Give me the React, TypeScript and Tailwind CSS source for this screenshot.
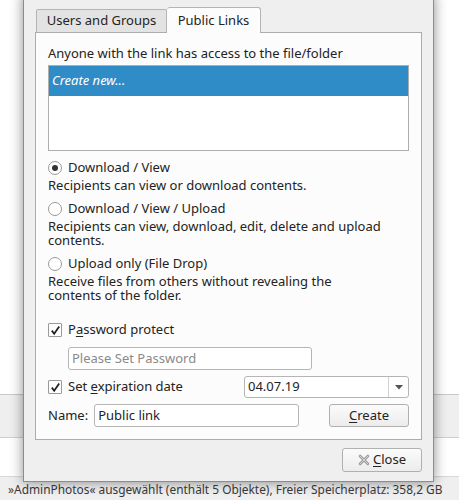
import React from 'react';

const font = { fontFamily: '"Noto Sans", "DejaVu Sans", sans-serif' };

const Radio = ({checked, label}: {checked?: boolean; label: string}) => (
    <div className="flex items-center h-[22px]">
        <span className="w-[14px] h-[14px] rounded-full border border-[#9a9a9a] bg-white flex items-center justify-center">
            {checked && <span className="w-[6px] h-[6px] rounded-full bg-[#333]"/>}
        </span>
        <span className="ml-[6px]">{label}</span>
    </div>
);

const Check = ({children}: {children: React.ReactNode}) => (
    <div className="flex items-center h-[22px]">
        <span className="w-[14px] h-[14px] border border-[#9a9a9a] bg-white flex items-center justify-center rounded-[1px]">
            <svg width="11" height="11" viewBox="0 0 11 11">
                <path d="M1.8 5.6 L4.2 8.8 L9.2 1.6" fill="none" stroke="#222" strokeWidth="1.8"/>
            </svg>
        </span>
        <span className="ml-[6px]">{children}</span>
    </div>
);

export default function App() {
    return (
        <div className="relative w-[459px] h-[500px] overflow-hidden bg-white text-[13px] text-[#232323]" style={font}>
            {/* background window */}
            <div className="flex flex-col h-full">
                <div className="h-[394px] bg-white"/>
                <div className="h-[43px] bg-[#efefef] border-t border-[#c8c8c8]"/>
                <div className="h-[39px] bg-white border-t border-[#d0d0d0]"/>
                <div className="flex-1 bg-[#efefef] border-t border-[#d8d8d8] pl-[8px] pt-[4px] text-[11.9px] text-[#3a3a3a] whitespace-nowrap">
                    »AdminPhotos« ausgewählt (enthält 5 Objekte), Freier Speicherplatz: 358,2 GB
                </div>
            </div>

            {/* dialog */}
            <div className="absolute left-[23px] top-[-6px] w-[411px] h-[488px] bg-[#efefef] border border-[#8c8c8c] shadow-[0_0_12px_rgba(0,0,0,0.45)] px-[11px] pt-[12px] flex flex-col">
                <div className="flex items-end h-[25px] pl-[1px]">
                    <div className="h-[23px] w-[131px] bg-[#e3e3e3] border border-[#b4b4b4] border-b-0 rounded-t-[2px] flex items-center justify-center">
                        Users and Groups
                    </div>
                    <div className="h-[26px] w-[94px] bg-[#fcfcfc] border border-[#b4b4b4] border-b-0 border-l-0 rounded-t-[3px] flex items-center justify-center -mb-px relative z-10">
                        Public Links
                    </div>
                </div>
                <div className="h-[408px] bg-[#fcfcfc] border border-[#acacac] px-[12px] pt-[11px]">
                    <div className="leading-[18px]">Anyone with the link has access to the file/folder</div>
                    <div className="mt-[3px] h-[86px] bg-white border border-[#aeaeae]">
                        <div className="h-[30px] bg-[#308cc6] text-white italic flex items-center pl-[3px]">Create new...</div>
                    </div>
                    <div className="mt-[6px]">
                        <Radio checked label="Download / View"/>
                        <div className="leading-[14px] mt-[-1px]">Recipients can view or download contents.</div>
                    </div>
                    <div className="mt-[6px]">
                        <Radio label="Download / View / Upload"/>
                        <div className="leading-[14px] mt-[-1px] w-[340px]">Recipients can view, download, edit, delete and upload contents.</div>
                    </div>
                    <div className="mt-[6px]">
                        <Radio label="Upload only (File Drop)"/>
                        <div className="leading-[14px] mt-[-1px] w-[295px]">Receive files from others without revealing the contents of the folder.</div>
                    </div>
                    <div className="mt-[17px]">
                        <Check>P<span className="underline underline-offset-2">a</span>ssword protect</Check>
                    </div>
                    <div className="mt-[6px] ml-[20px] w-[244px] h-[23px] bg-white border border-[#b5b5b5] rounded-[3px] flex items-center pl-[3px] text-[#8a8a8a]">
                        Please Set Password
                    </div>
                    <div className="mt-[6px] flex items-center justify-between">
                        <Check>Set <span className="underline underline-offset-2">e</span>xpiration date</Check>
                        <div className="w-[165px] h-[22px] bg-white border border-[#b5b5b5] rounded-[3px] flex items-center">
                            <span className="flex-1 pl-[3px]">04.07.19</span>
                            <span className="w-[20px] h-full border-l border-[#d0d0d0] flex items-center justify-center">
                                <svg width="8" height="5" viewBox="0 0 8 5"><path d="M0 0 H8 L4 4.5Z" fill="#555"/></svg>
                            </span>
                        </div>
                    </div>
                    <div className="mt-[6px] flex items-center">
                        <span>Name:</span>
                        <div className="ml-[6px] w-[205px] h-[23px] bg-white border border-[#b5b5b5] rounded-[3px] flex items-center pl-[3px]">Public link</div>
                        <div className="ml-auto w-[80px] h-[23px] bg-gradient-to-b from-[#fbfbfb] to-[#ececec] border border-[#b0b0b0] rounded-[3px] flex items-center justify-center">
                            <span><span className="underline underline-offset-2">C</span>reate</span>
                        </div>
                    </div>
                </div>
                <div className="flex justify-end mt-[8px]">
                    <div className="w-[80px] h-[24px] bg-gradient-to-b from-[#fbfbfb] to-[#ececec] border border-[#b0b0b0] rounded-[3px] flex items-center justify-center">
                        <svg width="12" height="12" viewBox="0 0 12 12" className="mr-[3px]">
                            <path d="M2 2 L10 10 M10 2 L2 10" stroke="#9a9a9a" strokeWidth="2.6" strokeLinecap="round"/>
                            <path d="M2 2 L10 10 M10 2 L2 10" stroke="#e6e6e6" strokeWidth="0.8" strokeLinecap="round"/>
                        </svg>
                        <span><span className="underline underline-offset-2">C</span>lose</span>
                    </div>
                </div>
            </div>
        </div>
    );
}
